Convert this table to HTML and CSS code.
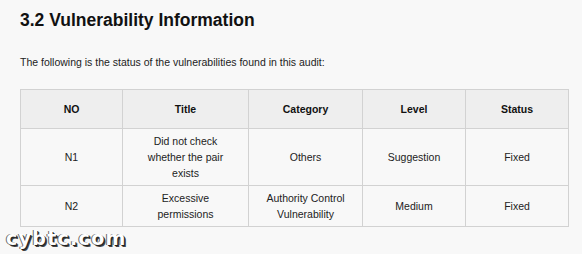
FILE: index.html
```html
<!DOCTYPE html>
<html>
<head>
<meta charset="utf-8">
<link rel="stylesheet" href="styles.css">
</head>
<body>
<div class="page">
  <h2 class="title">3.2 Vulnerability Information</h2>
  <p class="intro">The following is the status of the vulnerabilities found in this audit:</p>
  <table class="vuln">
    <colgroup>
      <col class="c1"><col class="c2"><col class="c3"><col class="c4"><col class="c5">
    </colgroup>
    <thead>
      <tr class="head"><th>NO</th><th>Title</th><th>Category</th><th>Level</th><th>Status</th></tr>
    </thead>
    <tbody>
      <tr class="r1"><td>N1</td><td>Did not check<br>whether the pair<br>exists</td><td>Others</td><td>Suggestion</td><td>Fixed</td></tr>
      <tr class="r2"><td>N2</td><td>Excessive<br>permissions</td><td>Authority Control<br>Vulnerability</td><td>Medium</td><td>Fixed</td></tr>
    </tbody>
  </table>
</div>
<div class="mark">cybtc.com</div>
</body>
</html>
```
FILE: styles.css
```css
html, body {
  margin: 0;
  padding: 0;
  background: #f8f8f8;
}
body {
  width: 582px;
  height: 254px;
  overflow: hidden;
  position: relative;
  font-family: "Liberation Sans", Arial, sans-serif;
  color: #222;
}
.page {
  padding: 10px 15px 0 20px;
}
.title {
  margin: 0;
  font-size: 17.5px;
  line-height: 20px;
  font-weight: bold;
  color: #111;
}
.intro {
  margin: 25px 0 0;
  font-size: 10.5px;
  line-height: 14px;
  color: #222;
}
.vuln {
  margin-top: 20px;
  border-collapse: collapse;
  table-layout: fixed;
  width: 548px;
  font-size: 10.5px;
  line-height: 16px;
}
.c1 { width: 102px; }
.c2 { width: 126px; }
.c3 { width: 114px; }
.c4 { width: 103px; }
.c5 { width: 103px; }
.vuln th, .vuln td {
  border: 1px solid #d2d2d2;
  text-align: center;
  vertical-align: middle;
  padding: 0 4px;
}
.vuln th {
  background: #eeeeee;
  font-weight: bold;
  color: #111;
}
.head { height: 39px; }
.r1 { height: 57px; }
.r2 { height: 41px; }
.mark {
  position: absolute;
  left: 6px;
  top: 227px;
  font-family: "DejaVu Sans", sans-serif;
  font-weight: bold;
  font-size: 19px;
  letter-spacing: 1.3px;
  color: #ffffff;
  text-shadow: 1px 1px 0 #222, 2px 2px 0 #444, -1px 0 0 #666;
}
```
